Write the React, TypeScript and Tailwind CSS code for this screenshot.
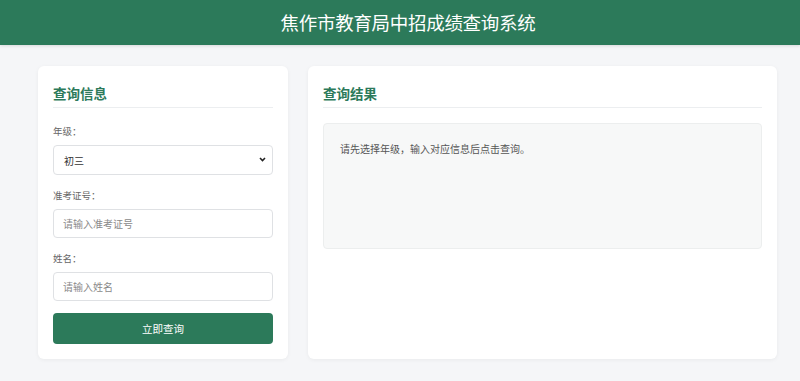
import { useState } from 'react'

const FONT = "font-['Noto_Sans_CJK_SC','Noto_Sans',sans-serif]"

function Field({ label, children }: { label: string; children: React.ReactNode }) {
  return (
    <div>
      <div className="h-[14px] text-[9.5px] leading-[14px] text-[#666]">{label}</div>
      <div className="mt-[7px]">{children}</div>
    </div>
  )
}

export default function App() {
  const [grade, setGrade] = useState('初三')
  const [examNo, setExamNo] = useState('')
  const [name, setName] = useState('')

  return (
    <div className={`min-h-screen bg-[#f5f6f8] ${FONT}`}>
      <header className="flex h-[45px] items-center justify-center bg-[#2c7a5a] pl-[16px] shadow-[0_1px_3px_rgba(0,0,0,0.12)]">
        <h1 className="text-[18.5px] font-normal tracking-[-0.3px] text-white">焦作市教育局中招成绩查询系统</h1>
      </header>

      <main className="ml-[38px] mr-[23px] flex gap-[20px] pt-[21px]">
        {/* 左侧：查询表单 */}
        <section className="w-[250px] shrink-0 rounded-[6px] bg-white px-[15px] pt-[16px] pb-[15px] shadow-[0_1px_4px_rgba(0,0,0,0.05)]">
          <h2 className="h-[26px] border-b border-[#eceef0] text-[13.5px] font-bold leading-[22px] text-[#2c7a5a]">查询信息</h2>

          <div className="mt-[16px] flex flex-col gap-[13px]">
            <Field label="年级：">
              <div className="relative">
                <select
                  value={grade}
                  onChange={(e) => setGrade(e.target.value)}
                  className="h-[30px] w-full appearance-none rounded-[4px] border border-[#dfe1e4] bg-white pl-[10px] text-[10px] text-[#333] outline-none"
                >
                  <option>初三</option>
                  <option>初二</option>
                </select>
                <svg className="pointer-events-none absolute right-[7px] top-[12px]" width="7" height="5" viewBox="0 0 7 5">
                  <path d="M1 1l2.5 2.5L6 1" fill="none" stroke="#222" strokeWidth="1.6" />
                </svg>
              </div>
            </Field>
            <Field label="准考证号：">
              <input
                value={examNo}
                onChange={(e) => setExamNo(e.target.value)}
                placeholder="请输入准考证号"
                className="h-[29px] w-full rounded-[4px] border border-[#dfe1e4] px-[9px] text-[10px] text-[#333] outline-none placeholder:text-[#8a8a8a]"
              />
            </Field>
            <Field label="姓名：">
              <input
                value={name}
                onChange={(e) => setName(e.target.value)}
                placeholder="请输入姓名"
                className="h-[29px] w-full rounded-[4px] border border-[#dfe1e4] px-[9px] text-[10px] text-[#333] outline-none placeholder:text-[#8a8a8a]"
              />
            </Field>
          </div>

          <button className="mt-[12px] h-[31px] w-full rounded-[4px] bg-[#2c7a5a] text-[10.5px] text-white">立即查询</button>
        </section>

        {/* 右侧：查询结果 */}
        <section className="flex-1 rounded-[6px] bg-white px-[15px] pt-[16px] shadow-[0_1px_4px_rgba(0,0,0,0.05)]">
          <h2 className="h-[26px] border-b border-[#eceef0] text-[13.5px] font-bold leading-[22px] text-[#2c7a5a]">查询结果</h2>
          <div className="mt-[15px] h-[126px] rounded-[4px] border border-[#eceeee] bg-[#f7f8f8] px-[16px] pt-[18px] text-[10px] leading-[14px] text-[#555]">
            请先选择年级，输入对应信息后点击查询。
          </div>
        </section>
      </main>
    </div>
  )
}
